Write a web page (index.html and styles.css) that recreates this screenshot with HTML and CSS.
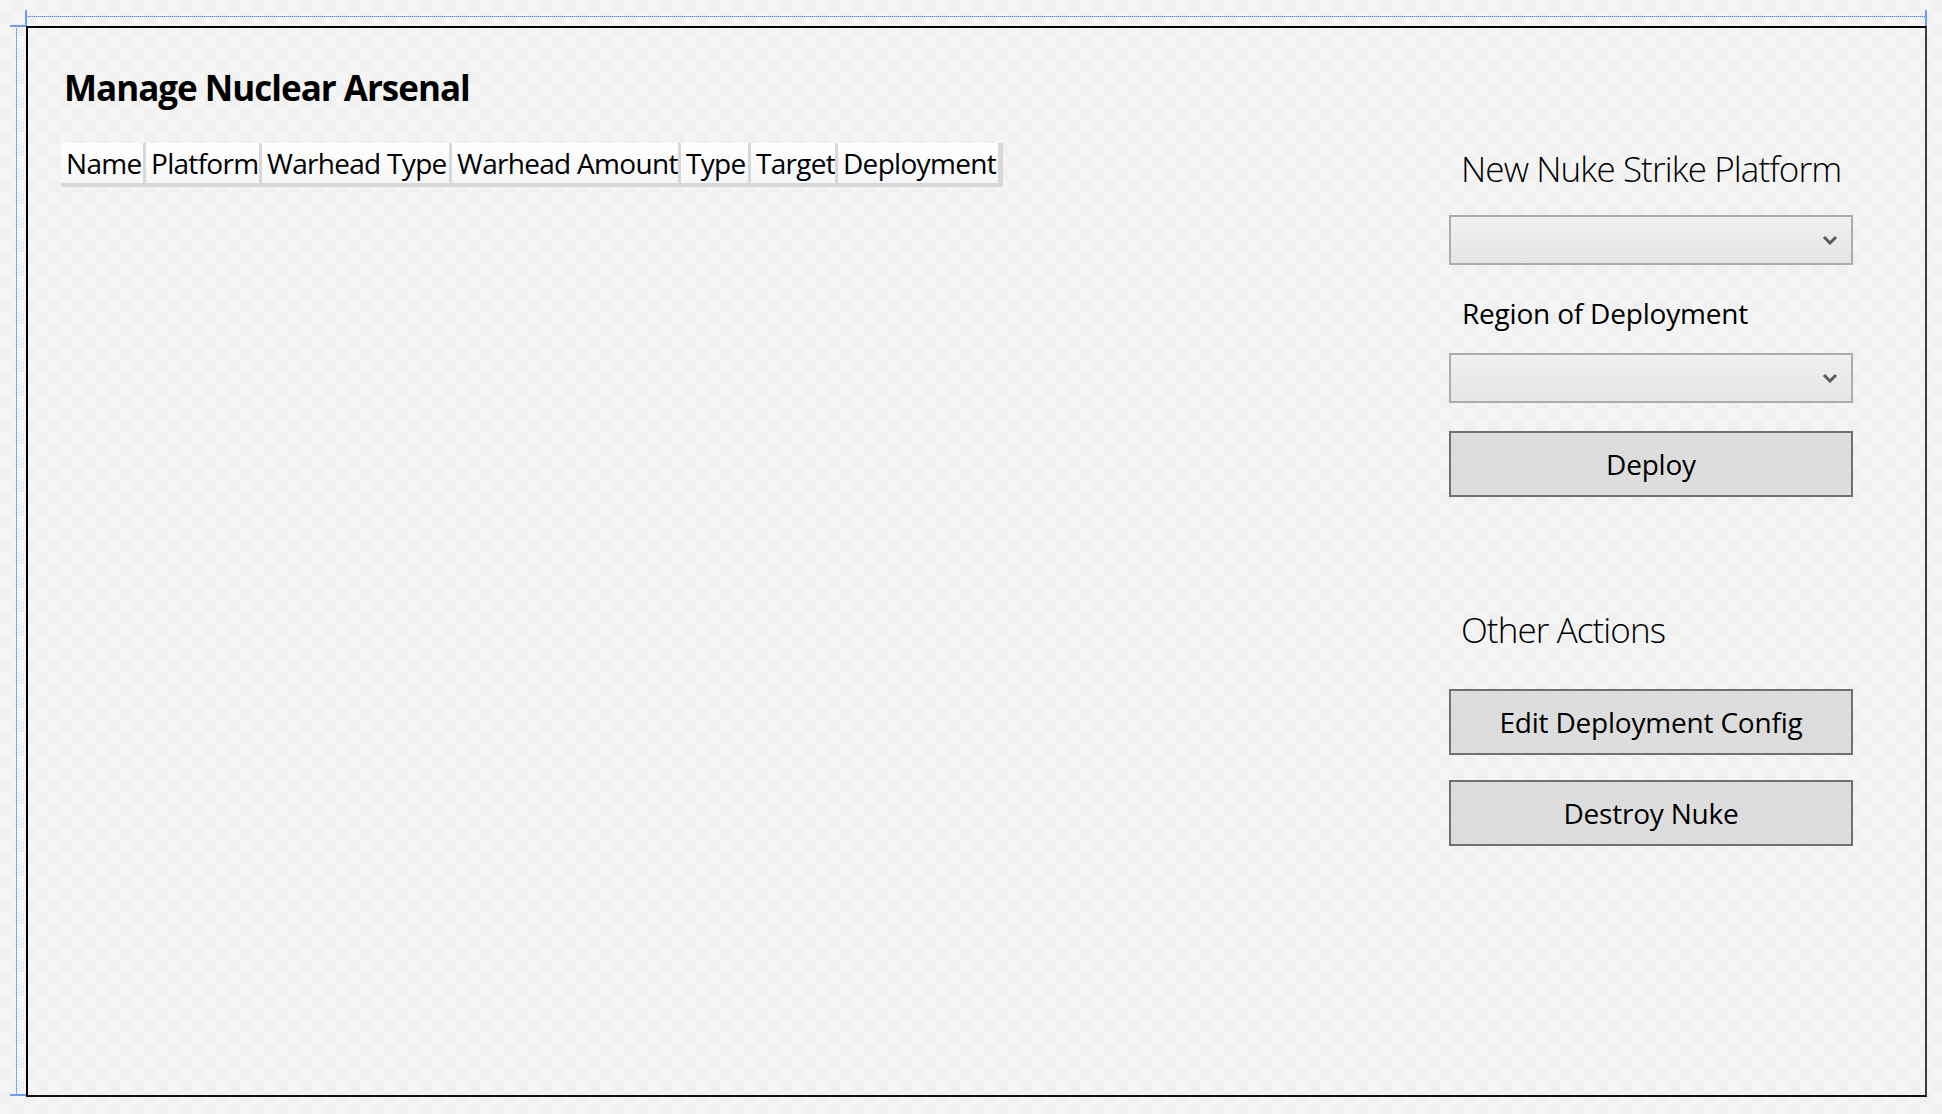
FILE: index.html
```html
<!DOCTYPE html>
<html lang="en">
<head>
<meta charset="utf-8">
<title>Manage Nuclear Arsenal</title>
<link rel="stylesheet" href="styles.css">
</head>
<body>
<div class="stage">
  <div class="guide guide-top"></div>
  <div class="guide guide-left"></div>
  <div class="tick tick-tl-h"></div>
  <div class="tick tick-tl-v"></div>
  <div class="tick tick-tr-v"></div>
  <div class="tick tick-bl-h"></div>

  <div class="frame">
    <section class="main">
      <h1 class="title">Manage Nuclear Arsenal</h1>
      <div class="grid-header">
        <div class="col col-name">Name</div>
        <div class="col col-platform">Platform</div>
        <div class="col col-wtype">Warhead Type</div>
        <div class="col col-wamount">Warhead Amount</div>
        <div class="col col-type">Type</div>
        <div class="col col-target">Target</div>
        <div class="col col-deploy">Deployment</div>
      </div>
    </section>

    <aside class="panel">
      <h2 class="panel-heading heading-first">New Nuke Strike Platform</h2>
      <div class="combo combo-first">
        <svg class="chev" width="16" height="10" viewBox="0 0 16 10"><polyline points="2,2 8,8 14,2" fill="none" stroke="#5a5a5a" stroke-width="3"/></svg>
      </div>
      <div class="panel-label">Region of Deployment</div>
      <div class="combo combo-second">
        <svg class="chev" width="16" height="10" viewBox="0 0 16 10"><polyline points="2,2 8,8 14,2" fill="none" stroke="#5a5a5a" stroke-width="3"/></svg>
      </div>
      <button class="btn btn-deploy">Deploy</button>
      <h2 class="panel-heading heading-other">Other Actions</h2>
      <button class="btn btn-edit">Edit Deployment Config</button>
      <button class="btn btn-destroy">Destroy Nuke</button>
    </aside>
  </div>
</div>
</body>
</html>
```
FILE: styles.css
```css
* { box-sizing: border-box; }

html, body {
  margin: 0;
  padding: 0;
}

body {
  width: 1942px;
  height: 1114px;
  overflow: hidden;
  font-family: "Open Sans", "Noto Sans", sans-serif;
  color: #000;
  background-color: #f4f4f4;
  background-image: repeating-conic-gradient(#f0f0f0 0 25%, #f5f5f5 0 50%);
  background-size: 24px 24px;
}

.stage {
  position: relative;
  width: 1942px;
  height: 1114px;
  padding: 26px 0 0 26px;
}

/* designer adornments */
.guide {
  position: absolute;
}
.guide-top {
  top: 16px;
  left: 26px;
  width: 1899px;
  height: 1px;
  background: repeating-linear-gradient(90deg, #4f84ec 0 1px, #b3cbf6 1px 2px);
}
.guide-left {
  top: 28px;
  left: 16px;
  width: 1px;
  height: 1066px;
  background: repeating-linear-gradient(180deg, #4f84ec 0 1px, #b3cbf6 1px 2px);
}
.tick {
  position: absolute;
  background: #6f9cf0;
}
.tick-tl-h { top: 25px; left: 10px; width: 16px; height: 2px; }
.tick-tl-v { top: 10px; left: 25px; width: 2px; height: 16px; }
.tick-tr-v { top: 10px; left: 1925px; width: 2px; height: 16px; }
.tick-bl-h { top: 1094px; left: 10px; width: 16px; height: 2px; }

.frame {
  width: 1901px;
  height: 1071px;
  border-top: 2px solid #000;
  border-left: 2px solid #000;
  border-bottom: 2px solid #111;
  border-right: 2px solid #3c3c3c;
  display: flex;
  justify-content: space-between;
  align-items: flex-start;
}

/* left area */
.main {
  padding-left: 33px;
  padding-top: 36px;
}

.title {
  margin: 0 0 31px 3px;
  font-size: 35px;
  line-height: 48px;
  font-weight: 700;
  letter-spacing: -1px;
}

.grid-header {
  display: flex;
  gap: 3px;
  height: 44px;
  padding-right: 5px;
  padding-bottom: 4px;
  background: #d8d8d8;
}

.col {
  height: 40px;
  padding-left: 5px;
  font-size: 28px;
  line-height: 40px;
  white-space: nowrap;
  overflow: hidden;
  letter-spacing: -0.7px;
  background: linear-gradient(#ffffff, #f5f6f8);
}
.col-name { width: 82px; }
.col-platform { width: 113px; }
.col-wtype { width: 187px; }
.col-wamount { width: 226px; }
.col-type { width: 67px; }
.col-target { width: 84px; }
.col-deploy { width: 160px; }

/* right panel */
.panel {
  width: 404px;
  margin-right: 72px;
  padding-top: 117px;
  display: flex;
  flex-direction: column;
}

.panel-heading {
  margin: 0;
  padding-left: 12px;
  font-size: 35px;
  line-height: 48px;
  font-weight: 300;
  letter-spacing: -0.9px;
  white-space: nowrap;
}
.heading-other { margin-top: 109px; }

.combo {
  height: 50px;
  border: 2px solid #acacac;
  background: linear-gradient(#f0f0f0, #e5e5e5);
  display: flex;
  align-items: center;
  justify-content: flex-end;
  padding-right: 13px;
}
.combo-first { margin-top: 22px; }
.combo-second { margin-top: 22px; }

.chev { display: block; }

.panel-label {
  margin-top: 30px;
  padding-left: 13px;
  font-size: 28px;
  line-height: 36px;
  letter-spacing: -0.2px;
}

.btn {
  display: block;
  width: 100%;
  height: 66px;
  border: 2px solid #707070;
  background: #dddddd;
  font-family: "Open Sans", "Noto Sans", sans-serif;
  font-size: 28px;
  letter-spacing: -0.2px;
  color: #000;
  padding: 0;
}
.btn-deploy { margin-top: 28px; }
.btn-edit { margin-top: 35px; }
.btn-destroy { margin-top: 25px; }
```
